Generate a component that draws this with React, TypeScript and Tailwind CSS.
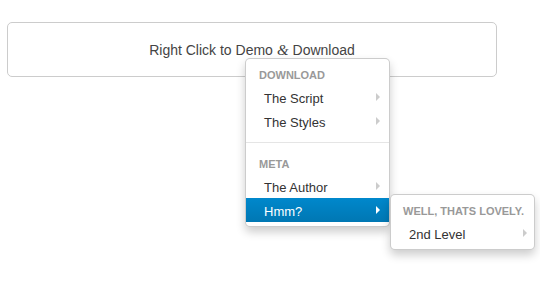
const menuGroups = [
  { title: "DOWNLOAD", items: ["The Script", "The Styles"] },
  { title: "META", items: ["The Author", "Hmm?"] },
];

function Arrow({ active }: { active?: boolean }) {
  return (
    <span
      className={`-mt-[3px] block h-0 w-0 border-y-[4px] border-l-[4px] border-y-transparent ${
        active ? "border-l-white" : "border-l-[#cccccc]"
      }`}
    />
  );
}

function Header({ label, pl = "pl-[13px]" }: { label: string; pl?: string }) {
  return (
    <div className={`flex h-[22px] items-center pt-[2px] ${pl} text-[11px] font-bold text-[#999999]`}>
      {label}
    </div>
  );
}

function Item({ label, active, pr = "pr-[9px]" }: { label: string; active?: boolean; pr?: string }) {
  return (
    <div
      className={`flex h-6 items-center justify-between pl-[18px] pt-[3px] ${pr} text-[13px] ${
        active ? "bg-gradient-to-b from-[#0088cc] to-[#0077b3] text-white" : "text-[#333333]"
      }`}
    >
      <span>{label}</span>
      <Arrow active={active} />
    </div>
  );
}

export default function App() {
  return (
    <div className="relative h-[300px] w-[540px] bg-white font-['Liberation_Sans',Arial,sans-serif]">
      <div className="pl-[7px] pt-[22px]">
        <div className="flex h-[55px] w-[490px] items-center justify-center rounded-[5px] border border-[#cccccc] pt-[2px] text-[14px] text-[#444444]">
          Right Click to Demo{" "}
          <span className="mx-[4px] font-['Liberation_Serif',serif] text-[15px] italic">&amp;</span> Download
        </div>
      </div>

      <div className="absolute left-[245px] top-[58px] w-[145px] rounded-[5px] border border-black/20 bg-white py-[4px] shadow-[0_5px_10px_rgba(0,0,0,0.2)]">
        {menuGroups.map((group, gi) => (
          <div key={group.title}>
            {gi > 0 && <div className="my-[9px] h-px bg-[#e5e5e5]" />}
            <Header label={group.title} />
            {group.items.map((item) => (
              <div key={item} className="relative">
                <Item label={item} active={item === "Hmm?"} />
                {item === "Hmm?" && (
                  <div className="absolute left-[144px] top-[-4px] w-[145px] rounded-[5px] border border-black/20 bg-white py-[4px] shadow-[0_5px_10px_rgba(0,0,0,0.2)]">
                    <Header label="WELL, THATS LOVELY." pl="pl-[12px]" />
                    <Item label="2nd Level" pr="pr-[7px]" />
                  </div>
                )}
              </div>
            ))}
          </div>
        ))}
      </div>
    </div>
  );
}
